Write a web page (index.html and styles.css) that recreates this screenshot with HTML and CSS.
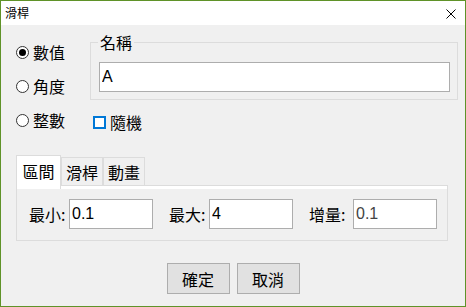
FILE: index.html
```html
<html>
<head>
    <title>滑桿</title>
    <link rel="stylesheet" href="styles.css">
</head>
<body>
    <div class="win">
        <div class="titlebar">
            <span class="title">滑桿</span>
            <svg class="close" width="10" height="10" viewBox="0 0 10 10">
                <path d="M0.5 0.5 L9.5 9.5 M9.5 0.5 L0.5 9.5" stroke="#000" stroke-width="1" fill="none"/>
            </svg>
        </div>

        <div class="main">
            <div class="radios">
                <label class="opt"><input type="radio" name="kind" checked> 數值</label>
                <label class="opt"><input type="radio" name="kind"> 角度</label>
                <label class="opt"><input type="radio" name="kind"> 整數</label>
            </div>
            <div class="side">
                <fieldset class="group">
                    <legend>名稱</legend>
                    <input class="field name" type="text" value="A">
                </fieldset>
                <label class="chk"><input type="checkbox"> 隨機</label>
            </div>
        </div>

        <!-- tab strip -->
        <div class="tabs">
            <div class="tab active">區間</div>
            <div class="tab">滑桿</div>
            <div class="tab">動畫</div>
        </div>
        <div class="panel">
            <span class="lbl">最小:</span>
            <input class="field num" type="text" value="0.1">
            <span class="lbl">最大:</span>
            <input class="field num" type="text" value="4">
            <span class="lbl wide">增量:</span>
            <input class="field num last dim" type="text" value="0.1">
        </div>

        <div class="buttons">
            <button class="btn">確定</button>
            <button class="btn">取消</button>
        </div>
    </div>
</body>
</html>
```

FILE: styles.css
```css
* {
    box-sizing: border-box;
}
body {
    margin: 0;
    font-family: "Noto Sans CJK TC", "Noto Sans", sans-serif;
    font-size: 16px;
    color: #000;
}
.win {
    width: 466px;
    height: 307px;
    border: 1px solid #5f9228;
    background: #f0f0f0;
}

.titlebar {
    height: 24px;
    background: #fff;
    display: flex;
    align-items: center;
    justify-content: space-between;
    padding: 0 9px 0 4px;
}
.title {
    font-size: 12px;
    line-height: 14px;
}
.close {
    display: block;
    margin-top: 2px;
}

.main {
    display: flex;
    padding: 7px 7px 0 15px;
}
.radios {
    width: 74px;
    padding-top: 10px;
    display: flex;
    flex-direction: column;
    gap: 14px;
}
.opt, .chk {
    display: flex;
    align-items: center;
    height: 20px;
    line-height: 20px;
}
.opt input {
    appearance: none;
    margin: 0 4px 0 0;
    width: 13px;
    height: 13px;
    border: 1px solid #333;
    border-radius: 50%;
    background: #fff;
    position: relative;
}
.opt input:checked::after {
    content: "";
    position: absolute;
    left: 2px;
    top: 2px;
    width: 7px;
    height: 7px;
    border-radius: 50%;
    background: #000;
}
.side {
    flex: 1;
}
.group {
    margin: 0;
    padding: 10px 7px 7px 8px;
    border: 1px solid #dcdcdc;
}
.group legend {
    padding: 0 2px;
    margin-left: -1px;
    line-height: 20px;
}
.chk {
    margin: 12px 0 0 3px;
}
.chk input {
    appearance: none;
    margin: 0 4px 0 0;
    width: 13px;
    height: 13px;
    border: 2px solid #0078d7;
    background: #fff;
}

.field {
    height: 30px;
    border: 1px solid #adadad;
    background: #fff;
    font-family: "Liberation Sans", sans-serif;
    font-size: 16px;
    padding: 0 2px;
    color: #000;
    outline: none;
}
.name {
    width: 100%;
}

.tabs {
    display: flex;
    align-items: flex-end;
    margin-top: 23px;
    padding-left: 15px;
    position: relative;
    z-index: 1;
}
.tab {
    width: 42px;
    height: 28px;
    border: 1px solid #dcdcdc;
    border-bottom: none;
    text-align: center;
    line-height: 28px;
}
.tab.active {
    width: 45px;
    height: 34px;
    margin-bottom: -4px;
    background: #fff;
    line-height: 30px;
}
.panel {
    height: 56px;
    margin: 0 17px 0 15px;
    border: 1px solid #dcdcdc;
    box-shadow: inset 0 3px 0 #fff;
    display: flex;
    align-items: flex-start;
    padding: 13px 0 0 12px;
}
.lbl {
    width: 40px;
    line-height: 30px;
}
.lbl.wide {
    width: 44px;
}
.num {
    width: 84px;
    margin-right: 16px;
}
.num.last {
    margin-right: 0;
}
.dim {
    color: #444;
}

.buttons {
    display: flex;
    justify-content: center;
    gap: 7px;
    margin-top: 22px;
}
.btn {
    width: 63px;
    height: 31px;
    border: 1px solid #adadad;
    background: #e1e1e1;
    font-family: "Noto Sans CJK TC", sans-serif;
    font-size: 16px;
    padding: 0;
}
```
